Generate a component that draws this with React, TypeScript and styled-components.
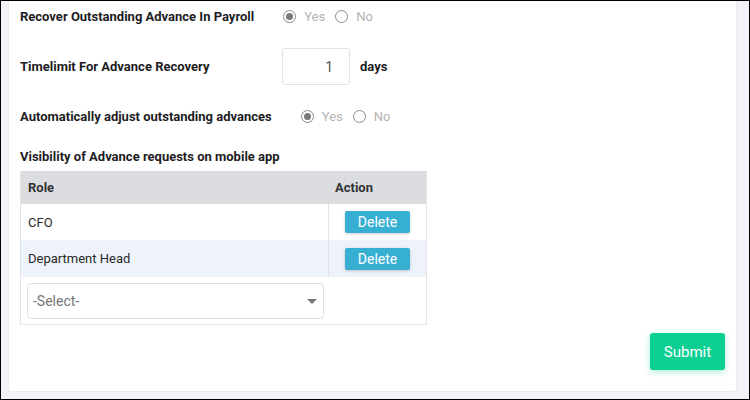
import React, { useState } from 'react'
import styled, { createGlobalStyle } from 'styled-components'

const GlobalStyle = createGlobalStyle`
  html, body {
    margin: 0;
    padding: 0;
    background: #f2f3f8;
    font-family: Roboto, 'Liberation Sans', Arial, sans-serif;
  }
  * { box-sizing: border-box; }
`

const Frame = styled.div`
  width: 750px;
  height: 400px;
  border: 1px solid #000;
  padding: 0 12px 7px 7px;
  display: flex;
  overflow: hidden;
`

const Card = styled.div`
  flex: 1;
  background: #fff;
  border: 1px solid #ebecf1;
  border-top: none;
  border-radius: 0 0 4px 4px;
  padding: 0 11px 0 11px;
  display: flex;
  flex-direction: column;
`

const Row = styled.div<{ $h: number; $mt: number }>`
  display: flex;
  align-items: center;
  height: ${p => p.$h}px;
  margin-top: ${p => p.$mt}px;
`

const Label = styled.div<{ $w?: number }>`
  font-size: 13px;
  font-weight: 700;
  color: #1d1d1f;
  width: ${p => (p.$w ? `${p.$w}px` : 'auto')};
  margin-right: ${p => (p.$w ? 0 : 29)}px;
  white-space: nowrap;
`

const RadioGroup = styled.div`
  display: flex;
  align-items: center;
`

const RadioOption = styled.label`
  display: flex;
  align-items: center;
  margin-right: 10px;
  cursor: pointer;
`

const RadioCircle = styled.span<{ $on: boolean }>`
  width: 13px;
  height: 13px;
  border-radius: 50%;
  border: 1.5px solid #8a8a8a;
  display: flex;
  align-items: center;
  justify-content: center;
  margin-right: 8px;

  &::after {
    content: '';
    width: 7px;
    height: 7px;
    border-radius: 50%;
    background: ${p => (p.$on ? '#7a7a7a' : 'transparent')};
  }
`

const RadioText = styled.span`
  font-size: 13px;
  color: #b3b3b3;
`

const NumberBox = styled.input`
  width: 68px;
  height: 37px;
  border: 1px solid #e2e2e6;
  border-radius: 3px;
  text-align: right;
  padding: 0 16px 0 8px;
  font-size: 14px;
  font-family: inherit;
  color: #555;
  outline: none;
`

const Unit = styled.span`
  font-size: 13px;
  font-weight: 700;
  color: #1d1d1f;
  margin-left: 10px;
`

const SectionTitle = styled.div`
  font-size: 13px;
  font-weight: 700;
  color: #1d1d1f;
  margin-top: 18px;
  line-height: 16px;
`

const Table = styled.div`
  width: 407px;
  margin-top: 6px;
  border: 1px solid #e3e4e8;
  border-top: none;
`

const TRow = styled.div<{ $bg: string; $h: number }>`
  display: grid;
  grid-template-columns: 307px 1fr;
  height: ${p => p.$h}px;
  background: ${p => p.$bg};
`

const Cell = styled.div<{ $divider?: boolean; $center?: boolean; $bold?: boolean }>`
  display: flex;
  align-items: center;
  justify-content: ${p => (p.$center ? 'center' : 'flex-start')};
  padding-left: ${p => (p.$center ? 0 : 7)}px;
  border-left: ${p => (p.$divider ? '1px solid #e3e4e8' : 'none')};
  font-size: 13px;
  font-weight: ${p => (p.$bold ? 700 : 400)};
  color: ${p => (p.$bold ? '#333' : '#2a2a2a')};
`

const DeleteButton = styled.button`
  width: 65px;
  height: 22px;
  border: none;
  border-radius: 2px;
  background: #37afd3;
  color: #fff;
  font-family: inherit;
  font-size: 14px;
  font-weight: 400;
  box-shadow: 0 1px 3px rgba(0, 0, 0, 0.2);
  cursor: pointer;
`

const SelectBox = styled.div`
  width: 297px;
  height: 36px;
  margin-left: -1px;
  border: 1px solid #dedfe3;
  border-radius: 4px;
  display: flex;
  align-items: center;
  justify-content: space-between;
  padding: 0 6px 0 5px;
  font-size: 14px;
  color: #777;
`

const Caret = styled.span`
  width: 0;
  height: 0;
  border-left: 5px solid transparent;
  border-right: 5px solid transparent;
  border-top: 5px solid #777;
  margin-top: 2px;
`

const Footer = styled.div`
  display: flex;
  justify-content: flex-end;
  margin-top: 8px;
`

const SubmitButton = styled.button`
  width: 75px;
  height: 37px;
  border: none;
  border-radius: 3px;
  background: #0ccf93;
  color: #fff;
  font-family: inherit;
  font-size: 15px;
  box-shadow: 0 2px 6px rgba(12, 207, 147, 0.35);
  cursor: pointer;
`

function YesNo({ value, onChange }: { value: boolean; onChange: (v: boolean) => void }) {
  return (
    <RadioGroup>
      <RadioOption onClick={() => onChange(true)}>
        <RadioCircle $on={value} />
        <RadioText>Yes</RadioText>
      </RadioOption>
      <RadioOption onClick={() => onChange(false)}>
        <RadioCircle $on={!value} />
        <RadioText>No</RadioText>
      </RadioOption>
    </RadioGroup>
  )
}

export default function App() {
  const [recover, setRecover] = useState(true)
  const [adjust, setAdjust] = useState(true)
  const [days, setDays] = useState('1')
  const [roles, setRoles] = useState(['CFO', 'Department Head'])

  return (
    <>
      <GlobalStyle />
      <Frame>
        <Card>
          <Row $h={30} $mt={0}>
            <Label>Recover Outstanding Advance In Payroll</Label>
            <YesNo value={recover} onChange={setRecover} />
          </Row>
          <Row $h={37} $mt={17}>
            <Label $w={262}>Timelimit For Advance Recovery</Label>
            <NumberBox value={days} onChange={e => setDays(e.target.value)} />
            <Unit>days</Unit>
          </Row>
          <Row $h={30} $mt={16}>
            <Label>Automatically adjust outstanding advances</Label>
            <YesNo value={adjust} onChange={setAdjust} />
          </Row>
          <SectionTitle>Visibility of Advance requests on mobile app</SectionTitle>
          <Table>
            <TRow $bg="#dcdde1" $h={33}>
              <Cell $bold>Role</Cell>
              <Cell $bold>Action</Cell>
            </TRow>
            {roles.map((r, i) => (
              <TRow key={r} $bg={i % 2 ? '#eef2fa' : '#fff'} $h={i % 2 ? 37 : 36}>
                <Cell>{r}</Cell>
                <Cell $divider $center>
                  <DeleteButton onClick={() => setRoles(roles.filter(x => x !== r))}>Delete</DeleteButton>
                </Cell>
              </TRow>
            ))}
            <TRow $bg="#fff" $h={47}>
              <Cell>
                <SelectBox>
                  -Select-
                  <Caret />
                </SelectBox>
              </Cell>
              <Cell />
            </TRow>
          </Table>
          <Footer>
            <SubmitButton>Submit</SubmitButton>
          </Footer>
        </Card>
      </Frame>
    </>
  )
}
